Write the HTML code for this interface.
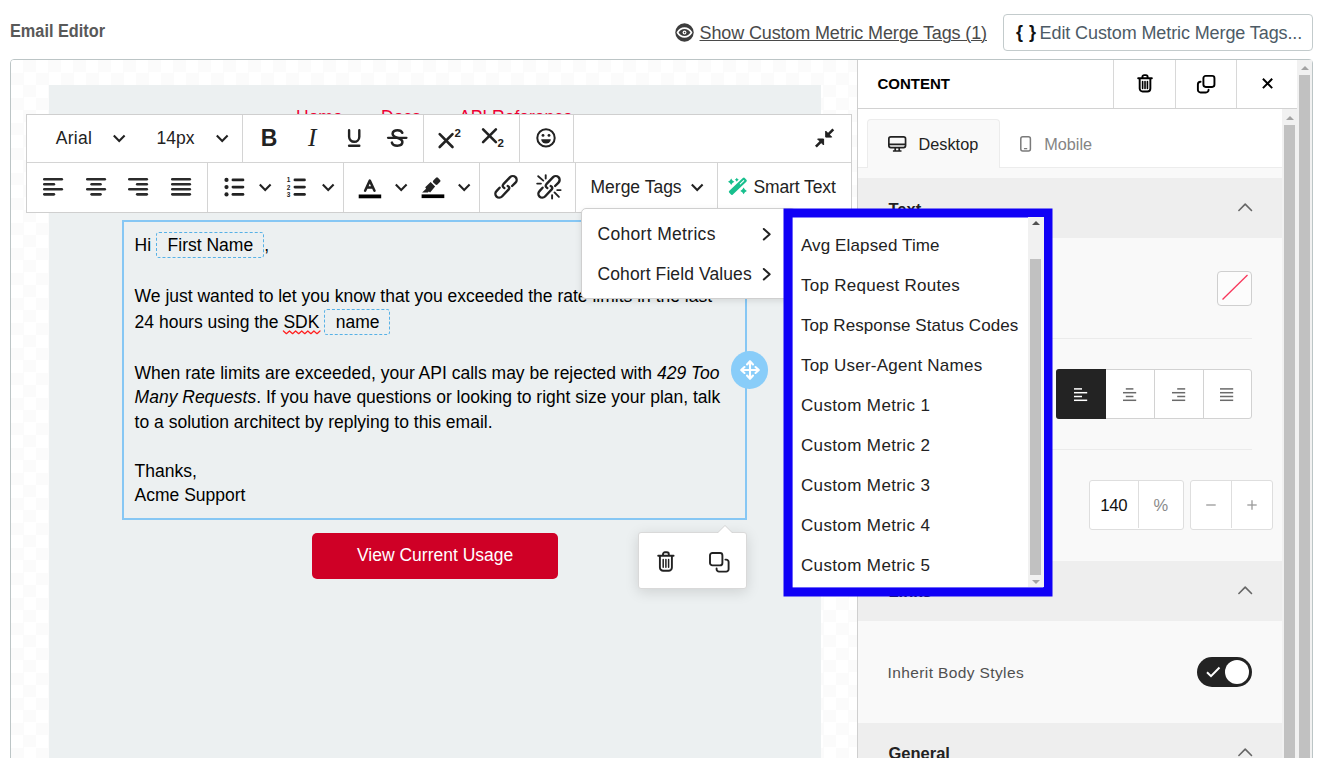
<!DOCTYPE html>
<html lang="en">
<head>
<meta charset="utf-8">
<title>Email Editor</title>
<style>
*{box-sizing:border-box;margin:0;padding:0}
html,body{width:1328px;height:758px;overflow:hidden;background:#fff}
body{position:relative;font-family:"Liberation Sans",sans-serif;color:#222}
.abs{position:absolute}
.t{position:absolute;white-space:nowrap;line-height:1;margin-top:.9px}
svg{position:absolute;overflow:visible}
/* header */
#title{left:10px;top:21px;font-size:18px;font-weight:700;color:#595959;transform:scaleX(.905);transform-origin:0 0}
#showlnk{left:699.5px;top:23px;font-size:18px;color:#4a4a4a;text-decoration:underline;text-decoration-thickness:1px;text-underline-offset:1.200px;letter-spacing:-.13px}
#editbtn{left:1003px;top:14px;width:310px;height:37px;border:1px solid #c3cbcc;border-radius:4px;background:#fff}
#editbtn .br{left:12px;top:7px;font-size:18px;font-weight:700;color:#111;letter-spacing:.5px}
#editbtn .lb{left:35.600px;top:8px;font-size:18px;color:#4d5b66;letter-spacing:-.1px}
/* frame */
#frame{left:10px;top:59px;width:1303px;height:720px;border:1px solid #bcc5c6;border-radius:4px;overflow:hidden;background:#fff}
#canvas{left:0;top:0;width:846px;height:720px;background:repeating-conic-gradient(#fbfbfb 0% 25%,#fff 0% 50%) 0 0/25px 25px}
#email{left:38px;top:25px;width:772px;height:700px;background:#ecf0f1}
.nav{font-size:17.5px;color:#ee0033;top:23px}

/* toolbar */
#tb{left:26px;top:114px;width:826px;height:99px;border:1px solid #cfcfcf;background:#fff}
.vs{position:absolute;width:1px;background:#d4d4d4}
.hs{position:absolute;height:1px;background:#d4d4d4}
.tbt{font-size:17.5px;color:#222}
.ic{stroke:#222;fill:none;stroke-linecap:round;stroke-linejoin:round}

/* text block */
#blk{left:122px;top:220px;width:625px;height:299.500px;border:2px solid #86c7f4}
.bt{font-size:17.5px;color:#000}
.mt{position:absolute;border:1px dashed #57b1e6;border-radius:3px}
#cta{left:312px;top:533px;width:246px;height:46px;background:#cf0026;border-radius:5px}
#cta span{left:45px;top:13.200px;font-size:17.5px;color:#fff}
#drag{left:730.800px;top:351.200px;width:37.500px;height:37.500px;border-radius:50%;background:#89cdf9}
#pop{left:638px;top:532px;width:109px;height:57px;background:#fff;border-radius:3px;border:1px solid #d9d9d9;box-shadow:0 3px 14px rgba(0,0,0,.13)}

/* side panel */
#sp{left:857px;top:60px;width:455px;height:700px;background:#f9f9f9;border-left:1px solid #cfcfcf}
.sh{position:absolute;left:858px;width:424px;background:#eeeeee}
.sht{font-size:16.5px;font-weight:700;color:#222;left:888.5px}
.sbt{position:absolute;background:#f1f1f1}
.sbh{position:absolute;background:#c1c1c1}
.up{position:absolute;width:0;height:0;border-left:4px solid transparent;border-right:4px solid transparent;border-bottom:4.500px solid #a3a3a3}
.dn{position:absolute;width:0;height:0;border-left:4px solid transparent;border-right:4px solid transparent;border-top:4.500px solid #a3a3a3}
.dv{position:absolute;height:1px;background:#ebebeb}
/* menus */
#menu{left:581px;top:208px;width:215px;height:91px;background:#fff;border:1px solid #cfcfcf;border-radius:5px;box-shadow:0 2px 6px rgba(0,0,0,.10)}
.mi{font-size:17.5px;color:#222;left:597.5px;letter-spacing:.32px}
.li{font-size:17px;color:#222;left:800.900px;letter-spacing:.2px}
</style>
</head>
<body>
<div id="title" class="t">Email Editor</div>
<svg id="eye" style="left:674.800px;top:22.800px" width="19" height="19" viewBox="0 0 19 19"><circle cx="9.500" cy="9.500" r="9.200" fill="#3d3d3d"/><path d="M2.500 9.500C4.600 5.900 7 5.200 9.500 5.200S14.400 5.900 16.500 9.500C14.400 13.100 12 13.800 9.500 13.800S4.600 13.100 2.500 9.500Z" fill="none" stroke="#fff" stroke-width="1.700" stroke-linejoin="round"/><circle cx="9.500" cy="9.500" r="1.900" fill="#fff"/><circle cx="9.600" cy="9.600" r=".800" fill="#3d3d3d"/></svg>
<div id="showlnk" class="t">Show Custom Metric Merge Tags (1)</div>
<div id="editbtn" class="abs"><span class="t br">{ }</span><span class="t lb">Edit Custom Metric Merge Tags...</span></div>

<div id="frame" class="abs">
  <div id="canvas" class="abs">
    <div id="email" class="abs">
      <span class="t nav" style="left:247px">Home</span>
      <span class="t nav" style="left:332px">Docs</span>
      <span class="t nav" style="left:410px">API Reference</span>
    </div>
  </div>
</div>
<!-- toolbar -->
<div id="tb" class="abs"></div>
<div class="hs" style="left:27px;top:162px;width:824px"></div>
<div class="vs" style="left:242px;top:115px;height:47px"></div>
<div class="vs" style="left:423px;top:115px;height:47px"></div>
<div class="vs" style="left:519px;top:115px;height:47px"></div>
<div class="vs" style="left:573px;top:115px;height:47px"></div>
<div class="vs" style="left:207px;top:163px;height:49px"></div>
<div class="vs" style="left:343px;top:163px;height:49px"></div>
<div class="vs" style="left:479px;top:163px;height:49px"></div>
<div class="vs" style="left:575px;top:163px;height:49px"></div>
<div class="vs" style="left:717px;top:163px;height:49px"></div>
<span class="t tbt" style="left:55.8px;top:129.1px;letter-spacing:.25px">Arial</span>
<svg style="left:113.2px;top:134.4px" width="12.4" height="8"><polyline class="ic" stroke-width="2.100" style="stroke-linecap:butt;stroke-linejoin:miter" points="0.800,1.500 6.200,6.900 11.600,1.500"/></svg>
<span class="t tbt" style="left:156.5px;top:129.1px">14px</span>
<svg style="left:215.9px;top:134.4px" width="12.4" height="8"><polyline class="ic" stroke-width="2.100" style="stroke-linecap:butt;stroke-linejoin:miter" points="0.800,1.500 6.200,6.900 11.600,1.500"/></svg>
<span class="t" style="left:260.8px;top:126.3px;font-size:23px;font-weight:700;color:#222">B</span>
<span class="t" style="left:308px;top:124.2px;font-size:25.4px;font-style:italic;font-family:'Liberation Serif',serif;color:#222">I</span>
<svg style="left:347px;top:128.5px" width="15" height="19"><path class="ic" stroke-width="2.4" d="M2.1 1.2v6.5a5.1 5.1 0 0 0 10.200 0V1.2"/><line class="ic" stroke-width="2.4" x1="2.1" y1="16.8" x2="12.3" y2="16.8"/></svg>
<svg style="left:386px;top:128px" width="23" height="20"><path class="ic" stroke-width="2.5" d="M16.3 4.800C15.600 3 13.900 2.200 11.500 2.200C8.700 2.200 6.600 3.500 6.600 5.800C6.600 8.100 8.600 8.900 11.300 9.800C14.300 10.700 16.400 11.600 16.400 14.100C16.400 16.400 14.300 17.700 11.300 17.700C8.500 17.700 6.500 16.600 5.900 14.600"/><line class="ic" stroke-width="2.2" x1="2" y1="9.800" x2="20.500" y2="9.800"/></svg>
<svg style="left:437px;top:127px" width="27" height="22"><path class="ic" stroke-width="2.6" stroke-linecap="butt" d="M2.7 7.2L15.500 20M15.500 7.200L2.700 20"/></svg>
<span class="t" style="left:454.6px;top:127.3px;font-size:11.5px;font-weight:700;color:#222">2</span>
<svg style="left:481px;top:127px" width="27" height="22"><path class="ic" stroke-width="2.6" stroke-linecap="butt" d="M2.100 2.400L14.900 15.200M14.900 2.400L2.100 15.200"/></svg>
<span class="t" style="left:497.6px;top:137.3px;font-size:11.5px;font-weight:700;color:#222">2</span>
<svg style="left:535px;top:127px" width="22" height="22"><circle class="ic" stroke-width="2" cx="11" cy="10.9" r="8.7"/><circle cx="8" cy="8.400" r="1.45" fill="#222"/><circle cx="14" cy="8.400" r="1.45" fill="#222"/><path d="M6.200 12.200h9.600a4.800 4.300 0 0 1 -9.600 0z" fill="#222"/></svg>
<svg style="left:814px;top:127px" width="22" height="22"><g fill="#222" stroke="#222" stroke-linejoin="round"><path stroke-width="2.6" stroke-linecap="butt" fill="none" d="M19.300 2.300L14.300 7.300M1.900 19.700L6.900 14.700"/><path stroke-width="1" d="M11.700 4.100V10.100H17.700zM9.600 18V12H3.600z"/></g></svg>
<svg style="left:42.9px;top:178.10px" width="20.1" height="18"><g stroke="#2b2b2b" stroke-width="2.6" stroke-linecap="round"><line x1="1.30" y1="1.30" x2="18.80" y2="1.30"/><line x1="1.30" y1="6.30" x2="10.90" y2="6.30"/><line x1="1.30" y1="11.30" x2="18.80" y2="11.30"/><line x1="1.30" y1="16.35" x2="10.90" y2="16.35"/></g></svg>
<svg style="left:85.9px;top:178.10px" width="20.1" height="18"><g stroke="#2b2b2b" stroke-width="2.6" stroke-linecap="round"><line x1="1.30" y1="1.30" x2="18.80" y2="1.30"/><line x1="5.60" y1="6.30" x2="14.50" y2="6.30"/><line x1="1.30" y1="11.30" x2="18.80" y2="11.30"/><line x1="5.60" y1="16.35" x2="14.50" y2="16.35"/></g></svg>
<svg style="left:127.9px;top:178.10px" width="20.1" height="18"><g stroke="#2b2b2b" stroke-width="2.6" stroke-linecap="round"><line x1="1.30" y1="1.30" x2="18.80" y2="1.30"/><line x1="9.20" y1="6.30" x2="18.80" y2="6.30"/><line x1="1.30" y1="11.30" x2="18.80" y2="11.30"/><line x1="9.20" y1="16.35" x2="18.80" y2="16.35"/></g></svg>
<svg style="left:171px;top:178.10px" width="20.1" height="18"><g stroke="#2b2b2b" stroke-width="2.6" stroke-linecap="round"><line x1="1.30" y1="1.30" x2="18.80" y2="1.30"/><line x1="1.30" y1="6.30" x2="18.80" y2="6.30"/><line x1="1.30" y1="11.30" x2="18.80" y2="11.30"/><line x1="1.30" y1="16.35" x2="18.80" y2="16.35"/></g></svg>
<svg style="left:224px;top:177px" width="22" height="21"><g class="ic" stroke-width="2.7"><line x1="8.9" y1="2.900" x2="19" y2="2.900"/><line x1="8.9" y1="10.100" x2="19" y2="10.100"/><line x1="8.900" y1="17.400" x2="19" y2="17.400"/></g><circle cx="2.500" cy="2.900" r="2.100" fill="#222"/><circle cx="2.500" cy="10.100" r="2.100" fill="#222"/><circle cx="2.500" cy="17.400" r="2.100" fill="#222"/></svg>
<svg style="left:259.2px;top:182.900px" width="12.4" height="9"><polyline class="ic" stroke-width="2.100" style="stroke-linecap:butt;stroke-linejoin:miter" points="0.800,1.500 6.200,6.900 11.600,1.500"/></svg>
<svg style="left:286px;top:176px" width="22" height="23"><g class="ic" stroke-width="2.700"><line x1="8.900" y1="3.900" x2="18.500" y2="3.900"/><line x1="8.900" y1="11.100" x2="18.500" y2="11.100"/><line x1="8.900" y1="18.400" x2="18.500" y2="18.400"/></g><text x="0.800" y="6.300" font-family="Liberation Sans,sans-serif" font-weight="700" font-size="6.500" fill="#222">1</text><text x="0.800" y="13.600" font-family="Liberation Sans,sans-serif" font-weight="700" font-size="6.500" fill="#222">2</text><text x="0.800" y="20.900" font-family="Liberation Sans,sans-serif" font-weight="700" font-size="6.500" fill="#222">3</text></svg>
<svg style="left:321.8px;top:182.900px" width="12.4" height="9"><polyline class="ic" stroke-width="2.100" style="stroke-linecap:butt;stroke-linejoin:miter" points="0.800,1.500 6.200,6.900 11.600,1.500"/></svg>
<svg style="left:358px;top:178px" width="24" height="22"><path class="ic" stroke-width="2.500" d="M7.100 12.700L11.800 2.600L16.500 12.700M8.700 9.400H14.900"/><rect x="0.700" y="16.500" width="22.500" height="3.800" fill="#000"/></svg>
<svg style="left:395.2px;top:182.900px" width="12.4" height="9"><polyline class="ic" stroke-width="2.100" style="stroke-linecap:butt;stroke-linejoin:miter" points="0.800,1.500 6.200,6.900 11.600,1.500"/></svg>
<svg style="left:421px;top:175px" width="24" height="25"><g fill="#242424"><rect x="-2.900" y="-3.300" width="5.800" height="6.600" rx="1.400" transform="translate(15.700,6.150) rotate(45)"/><path d="M9.600 7.100L14.100 11.400L9.100 17.400L7.800 16.500L6.900 17.400H1.100L5.100 13.800L4.200 12.300Z"/></g><rect x="0.600" y="19.400" width="22.700" height="3.700" fill="#000"/></svg>
<svg style="left:458px;top:182.900px" width="12.4" height="9"><polyline class="ic" stroke-width="2.100" style="stroke-linecap:butt;stroke-linejoin:miter" points="0.800,1.500 6.200,6.900 11.600,1.500"/></svg>
<svg style="left:484px;top:166px" width="40" height="40"><path class="ic" stroke-width="2.400" d="M20.300 22Q17.600 20.300 19.400 18.200L26.100 11.200A3.800 3.800 0 0 1 31.500 16.600L28.100 20M15.600 21.700L12.500 25.100A3.800 3.800 0 0 0 18 30.500L24.700 23.400Q26.300 21.500 23.700 20"/></svg>
<svg style="left:527px;top:166px" width="50" height="40"><path class="ic" stroke-width="2.400" d="M20.300 22Q17.600 20.300 19.400 18.200L26.100 11.200A3.800 3.800 0 0 1 31.500 16.600L28.100 20M15.600 21.700L12.500 25.100A3.800 3.800 0 0 0 18 30.500L24.700 23.400Q26.300 21.500 23.700 20"/><g class="ic" stroke-width="1.900"><line x1="11.200" y1="10.200" x2="16.300" y2="14.600"/><line x1="18.700" y1="9.100" x2="18.700" y2="12.500"/><line x1="10.200" y1="17.600" x2="13.900" y2="17.600"/><line x1="30.200" y1="24.100" x2="33.600" y2="24.100"/><line x1="27.500" y1="26.400" x2="31.900" y2="30.800"/><line x1="25.100" y1="29.100" x2="25.100" y2="32.500"/></g></svg>
<span class="t tbt" style="left:590.5px;top:177.8px">Merge Tags</span>
<svg style="left:691.4px;top:182.900px" width="12.4" height="9"><polyline class="ic" stroke-width="2.100" style="stroke-linecap:butt;stroke-linejoin:miter" points="0.800,1.500 6.200,6.900 11.600,1.500"/></svg>
<svg style="left:727px;top:177px" width="21" height="20"><g fill="#17bf8d"><rect x="-10.750" y="-2.550" width="21.500" height="5.100" rx="1.500" transform="translate(10.850,9.250) rotate(-43.200)"/><path d="M4.20 1.50Q5.16 3.74 7.40 4.70Q5.16 5.66 4.20 7.90Q3.24 5.66 1.00 4.70Q3.24 3.74 4.20 1.50ZM9.80 0.70Q10.40 2.10 11.80 2.70Q10.40 3.30 9.80 4.70Q9.20 3.30 7.80 2.70Q9.20 2.10 9.80 0.70ZM16.60 10.60Q17.59 12.91 19.90 13.90Q17.59 14.89 16.60 17.20Q15.61 14.89 13.30 13.90Q15.61 12.91 16.60 10.60Z"/></g><line x1="13.300" y1="6.900" x2="16.700" y2="3.700" stroke="#fff" stroke-width="1.100" stroke-linecap="round"/></svg>
<span class="t tbt" style="left:753.4px;top:177.8px;letter-spacing:-.1px">Smart Text</span>
<!-- block -->
<div id="blk" class="abs"></div>
<div class="t bt" style="left:134.600px;top:235.7px">Hi</div>
<div class="mt" style="left:156px;top:232px;width:108px;height:26px"></div>
<div class="t bt" style="left:167.6px;top:235.7px">First Name</div>
<div class="t bt" style="left:264.3px;top:235.7px">,</div>
<div class="t bt" style="left:134.600px;top:287.1px">We just wanted to let you know that you exceeded the rate limits in the last</div>
<div class="t bt" style="left:134.600px;top:313.0px">24 hours using the SDK</div>
<svg style="left:280px;top:329.700px" width="44" height="6"><polyline fill="none" stroke="#ff1f1f" stroke-width="1.250" stroke-linejoin="round" stroke-linecap="round" points="3.4,1.0 6.4,3.7 9.5,1.0 12.6,3.7 15.6,1.0 18.7,3.7 21.7,1.0 24.8,3.7 27.8,1.0 30.9,3.7 33.9,1.0 37.0,3.7 40.0,1.0"/></svg>
<div class="mt" style="left:324.300px;top:309px;width:66px;height:25.500px"></div>
<div class="t bt" style="left:335.700px;top:313.0px">name</div>
<div class="t bt" style="left:134.600px;top:364.0px">When rate limits are exceeded, your API calls may be rejected with <i>429 Too</i></div>
<div class="t bt" style="left:134.600px;top:388.1px"><i>Many Requests</i>. If you have questions or looking to right size your plan, talk</div>
<div class="t bt" style="left:134.600px;top:412.9px">to a solution architect by replying to this email.</div>
<div class="t bt" style="left:134.600px;top:461.8px">Thanks,</div>
<div class="t bt" style="left:134.600px;top:486.0px">Acme Support</div>
<div id="cta" class="abs"><span class="t">View Current Usage</span></div>
<div id="drag" class="abs"><svg style="left:8.750px;top:8.750px" width="20" height="20" viewBox="0 0 20 20"><path fill="none" stroke="#fff" stroke-width="2.100" stroke-linecap="round" stroke-linejoin="round" d="M10 1.400V18.600M1.400 10H18.600M7 4.500L10 1.200L13 4.500M7 15.500L10 18.800L13 15.500M4.500 7L1.200 10L4.500 13M15.500 7L18.800 10L15.500 13"/></svg></div>
<div id="pop" class="abs"><div class="abs" style="left:77.500px;top:-8.500px;width:0;height:0;border-left:8.500px solid transparent;border-right:8.500px solid transparent;border-bottom:8.500px solid #d4d4d4"></div><div class="abs" style="left:77.700px;top:-7.300px;width:0;height:0;border-left:8.300px solid transparent;border-right:8.300px solid transparent;border-bottom:8.300px solid #fff"></div><svg style="left:17.800px;top:18.300px" width="18" height="21"><g class="ic" stroke-width="1.900"><path d="M1.200 4.800H16.600M6 4.400V3.200A1.900 1.900 0 0 1 7.900 1.300H9.900A1.900 1.900 0 0 1 11.800 3.200V4.400M2.900 5.200V16.400A3.300 3.300 0 0 0 6.200 19.700H11.600A3.300 3.300 0 0 0 14.900 16.400V5.200"/><path stroke-width="1.500" d="M6.200 8.400V16.200M8.900 8.400V16.200M11.600 8.400V16.200"/></g></svg><svg style="left:69.500px;top:18.800px" width="21" height="21"><g class="ic" stroke-width="1.900"><rect x="1" y="1" width="12.400" height="12.400" rx="2.400"/><path d="M16.400 7.600H17.200A2.400 2.400 0 0 1 19.600 10V17.200A2.400 2.400 0 0 1 17.200 19.600H10A2.400 2.400 0 0 1 7.600 17.200V16.400"/></g></svg></div>
<!-- panel -->
<div id="sp" class="abs"></div>
<div class="abs" style="left:858px;top:60px;width:439px;height:48px;background:#fff"></div>
<div class="hs" style="left:858px;top:108px;width:439px;background:#d2d2d2"></div>
<div class="vs" style="left:1113px;top:60px;height:48px;background:#d8d8d8"></div>
<div class="vs" style="left:1175px;top:60px;height:48px;background:#d8d8d8"></div>
<div class="vs" style="left:1236px;top:60px;height:48px;background:#d8d8d8"></div>
<span class="t" style="left:877.5px;top:75px;font-size:15px;font-weight:700;color:#000">CONTENT</span>
<svg style="left:1136.500px;top:74.300px" width="18" height="21" viewBox="0 0 17.800 21"><g transform="scale(.89)"><g class="ic" style="stroke:#000" stroke-width="2.150"><path d="M1.200 4.800H16.600M6 4.400V3.200A1.900 1.900 0 0 1 7.900 1.300H9.900A1.900 1.900 0 0 1 11.800 3.200V4.400M2.900 5.200V16.400A3.300 3.300 0 0 0 6.200 19.700H11.600A3.300 3.300 0 0 0 14.900 16.400V5.200"/><path stroke-width="1.800" d="M6.200 8.400V16.200M8.900 8.400V16.200M11.600 8.400V16.200"/></g></g></svg>
<svg style="left:1196.500px;top:74.600px" width="21" height="21"><g transform="scale(.89)"><g class="ic" style="stroke:#000" stroke-width="2.150"><rect x="7.200" y="1" width="12.400" height="12.400" rx="2.600"/><path d="M4 7.600A3 3 0 0 0 1 10.600V16.600A3 3 0 0 0 4 19.600H10A3 3 0 0 0 13 16.600"/></g></g></svg>
<svg style="left:1261px;top:77.300px" width="14" height="14"><path class="ic" style="stroke:#000;stroke-linecap:butt" stroke-width="1.950" d="M1.900 1.800L11.200 11.100M11.200 1.800L1.900 11.100"/></svg>
<div class="abs" style="left:858px;top:109px;width:424px;height:59px;background:#fff;border-bottom:1px solid #ececec"></div>
<div class="abs" style="left:867px;top:119px;width:133px;height:49px;background:#f9f9f9;border:1px solid #ececec;border-bottom:none;border-radius:4px 4px 0 0"></div>
<svg style="left:888px;top:136.300px" width="19" height="16"><g class="ic" stroke="#222" stroke-width="1.700"><rect x="0.850" y="0.850" width="16.700" height="10.700" rx="2"/><path d="M0.850 8.400H17.550M7.200 11.700V14.600M11.200 11.700V14.600M4.900 15H13.500" stroke-linecap="butt"/></g></svg>
<span class="t" style="left:918.600px;top:135.200px;font-size:16.250px;color:#222">Desktop</span>
<svg style="left:1020.400px;top:136.300px" width="12" height="16"><g class="ic" style="stroke:#7a7a7a" stroke-width="1.500"><rect x="0.800" y="0.800" width="9.600" height="14.300" rx="2"/><path d="M4.500 12.700H6.700" stroke-width="1.300"/></g></svg>
<span class="t" style="left:1044.200px;top:135.200px;font-size:16.250px;color:#848484">Mobile</span>
<div class="sh" style="top:178px;height:59.700px"></div>
<span class="t sht" style="top:199.700px">Text</span>
<svg style="left:1237.7px;top:203.2px" width="14.400" height="8.400"><polyline fill="none" stroke="#666" stroke-width="1.600" stroke-linecap="round" stroke-linejoin="round" points="0.900,7.500 7.200,1.100 13.500,7.500"/></svg>
<div class="abs" style="left:1217.200px;top:271.400px;width:34.700px;height:34.500px;border:1px solid #cfcfcf;border-radius:4px;background:#fcfcfc"><svg style="left:0;top:0" width="32" height="32"><line x1="4.500" y1="27.500" x2="29.500" y2="3" stroke="#f8365b" stroke-width="1.300"/></svg></div>
<div class="dv" style="left:888px;top:338px;width:364px"></div>
<div class="abs" style="left:1056px;top:369px;width:195.500px;height:49.700px;border:1px solid #d2d2d2;border-radius:3px;background:#fff;overflow:hidden"><div class="vs" style="left:96.500px;top:0;height:48px;background:#d2d2d2"></div><div class="vs" style="left:146px;top:0;height:48px;background:#d2d2d2"></div></div>
<div class="abs" style="left:1055.700px;top:369px;width:50.300px;height:49.700px;background:#232323;border-radius:3px 0 0 3px"></div>
<svg style="left:1074px;top:387.5px" width="13.2" height="13.500"><g stroke="#fff" stroke-width="1.5" stroke-linecap="butt"><line x1="0" y1="0.9" x2="8" y2="0.9"/><line x1="0" y1="4.7" x2="13.2" y2="4.7"/><line x1="0" y1="8.5" x2="8" y2="8.5"/><line x1="0" y1="12.3" x2="13.2" y2="12.3"/></g></svg>
<svg style="left:1122.9px;top:387.5px" width="13.2" height="13.500"><g stroke="#6a6a6a" stroke-width="1.5" stroke-linecap="butt"><line x1="2.8" y1="0.9" x2="10.399999999999999" y2="0.9"/><line x1="0" y1="4.7" x2="13.2" y2="4.7"/><line x1="2.8" y1="8.5" x2="10.399999999999999" y2="8.5"/><line x1="0" y1="12.3" x2="13.2" y2="12.3"/></g></svg>
<svg style="left:1172px;top:387.5px" width="13.2" height="13.500"><g stroke="#6a6a6a" stroke-width="1.5" stroke-linecap="butt"><line x1="5.199999999999999" y1="0.9" x2="13.2" y2="0.9"/><line x1="0" y1="4.7" x2="13.2" y2="4.7"/><line x1="5.199999999999999" y1="8.5" x2="13.2" y2="8.5"/><line x1="0" y1="12.3" x2="13.2" y2="12.3"/></g></svg>
<svg style="left:1220px;top:387.5px" width="13.2" height="13.500"><g stroke="#6a6a6a" stroke-width="1.5" stroke-linecap="butt"><line x1="0" y1="0.9" x2="13.2" y2="0.9"/><line x1="0" y1="4.7" x2="13.2" y2="4.7"/><line x1="0" y1="8.5" x2="13.2" y2="8.5"/><line x1="0" y1="12.3" x2="13.2" y2="12.3"/></g></svg>
<div class="dv" style="left:888px;top:449.300px;width:364px"></div>
<div class="abs" style="left:1089.400px;top:480px;width:94.300px;height:49.600px;border:1px solid #dedede;border-radius:3px;background:#fff"><div class="vs" style="left:48px;top:0;height:47.200px;background:#dedede"></div></div>
<span class="t" style="left:1100.300px;top:497.400px;font-size:16.800px;color:#111;letter-spacing:-.3px">140</span>
<span class="t" style="left:1153.400px;top:495.700px;font-size:16.500px;color:#8a8a8a;letter-spacing:-.2px">%</span>
<div class="abs" style="left:1190.100px;top:480px;width:82.500px;height:49.600px;border:1px solid #dedede;border-radius:3px;background:#fff"><div class="vs" style="left:40.200px;top:0;height:47.200px;background:#dedede"></div></div>
<svg style="left:1204.800px;top:499px" width="60" height="12"><g stroke="#9a9a9a" stroke-width="1.300"><line x1="1.200" y1="6" x2="10.700" y2="6"/><line x1="42.300" y1="6" x2="51.700" y2="6"/><line x1="47" y1="1.300" x2="47" y2="10.700"/></g></svg>
<div class="sh" style="top:561px;height:60px"></div>
<span class="t sht" style="top:581.700px">Links</span>
<svg style="left:1237.7px;top:585.8px" width="14.400" height="8.400"><polyline fill="none" stroke="#666" stroke-width="1.600" stroke-linecap="round" stroke-linejoin="round" points="0.900,7.500 7.200,1.100 13.500,7.500"/></svg>
<span class="t" style="left:887.600px;top:663.900px;font-size:15.500px;color:#505050;letter-spacing:.38px">Inherit Body Styles</span>
<div class="abs" style="left:1196.700px;top:657px;width:55.700px;height:30px;border-radius:15px;background:#232323"><div class="abs" style="left:28.500px;top:3px;width:24px;height:24px;border-radius:50%;background:#fff"></div><svg style="left:9.500px;top:9px" width="15" height="12"><polyline fill="none" stroke="#fff" stroke-width="2" points="1,6.200 5,10.200 13.500,1.500"/></svg></div>
<div class="sh" style="top:723px;height:60px"></div>
<span class="t sht" style="top:744.600px">General</span>
<svg style="left:1237.7px;top:747.5px" width="14.400" height="8.400"><polyline fill="none" stroke="#666" stroke-width="1.600" stroke-linecap="round" stroke-linejoin="round" points="0.900,7.500 7.200,1.100 13.500,7.500"/></svg>
<div class="sbt" style="left:1282px;top:109px;width:15px;height:660px"></div><div class="up" style="left:1285.500px;top:115.700px"></div><div class="sbh" style="left:1284px;top:125px;width:11px;height:640px"></div>
<div class="sbt" style="left:1297px;top:60px;width:15px;height:700px"></div><div class="up" style="left:1300.500px;top:65.700px"></div><div class="sbh" style="left:1299px;top:75px;width:11px;height:690px"></div>
<div id="menu" class="abs"></div>
<span class="t mi" style="top:225.100px">Cohort Metrics</span>
<span class="t mi" style="top:265.100px;letter-spacing:.1px">Cohort Field Values</span>
<svg style="left:762px;top:227.3px" width="10" height="14.500"><polyline class="ic" stroke-width="2" points="1.800,2 7.700,7.250 1.800,12.500"/></svg>
<svg style="left:762px;top:267.3px" width="10" height="14.500"><polyline class="ic" stroke-width="2" points="1.800,2 7.700,7.250 1.800,12.500"/></svg>
<svg id="lb" style="left:780px;top:205px" width="280" height="400"><rect x="3.500" y="3.500" width="269" height="388" fill="#1000f6"/><rect x="12.600" y="12.500" width="250.700" height="369.900" fill="#fff"/></svg>
<span class="t li" style="top:235.8px;letter-spacing:0.13px">Avg Elapsed Time</span>
<span class="t li" style="top:275.8px;letter-spacing:0.28px">Top Request Routes</span>
<span class="t li" style="top:315.8px;letter-spacing:0.08px">Top Response Status Codes</span>
<span class="t li" style="top:355.8px;letter-spacing:0.24px">Top User-Agent Names</span>
<span class="t li" style="top:395.8px;letter-spacing:0.38px">Custom Metric 1</span>
<span class="t li" style="top:435.8px;letter-spacing:0.38px">Custom Metric 2</span>
<span class="t li" style="top:475.8px;letter-spacing:0.38px">Custom Metric 3</span>
<span class="t li" style="top:515.8px;letter-spacing:0.38px">Custom Metric 4</span>
<span class="t li" style="top:555.8px;letter-spacing:0.38px">Custom Metric 5</span>
<div class="sbt" style="left:1028px;top:217px;width:16px;height:370px"></div>
<div class="up" style="left:1031.700px;top:220.800px;border-bottom-color:#505050"></div>
<div class="sbh" style="left:1030.100px;top:259px;width:11px;height:316px"></div>
<div class="dn" style="left:1031.700px;top:579.500px"></div>
</body>
</html>
